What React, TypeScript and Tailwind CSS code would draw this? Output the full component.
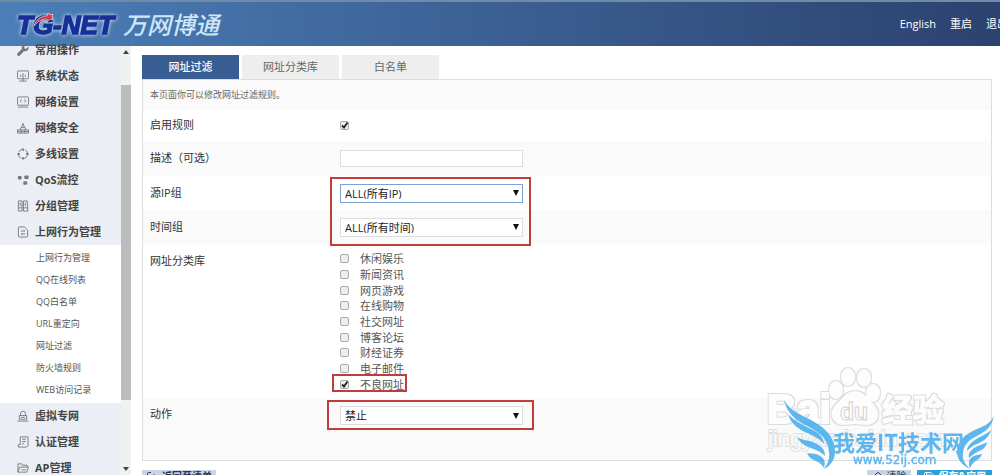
import { useState } from "react";
import type { ReactNode } from "react";
import { Eraser, LogOut, Save } from "lucide-react";

interface MenuItem {
  label: string;
  icon: ReactNode;
  children?: string[];
}

const icons = {
  status: (
    <>
      <rect x="0.5" y="1" width="12" height="8.5" rx="1" />
      <path d="M4 7.500V5M6.500 9.500v-6M9 7.500V5M6.500 9.500V12M2.500 12h8" />
    </>
  ),
  network: (
    <>
      <rect x="0.5" y="1" width="12" height="9" rx="1" />
      <path d="M5 3.5 3.5 5.2 5 7M8 3.5l1.5 1.7L8 7M1 12h11" />
    </>
  ),
  security: (
    <>
      <path d="M6.5 1v2.500M3.5 8l3-5.500L9.500 8M4.500 6h4" />
      <path d="M.5 8.500h12v3.500H.5zM4.500 8.500V12M8.500 8.500V12M.5 10.200h12" />
    </>
  ),
  lines: (
    <>
      <circle cx="6.500" cy="6.500" r="5" strokeDasharray="4.850 3" strokeDashoffset="-1.500" />
      <path d="M6.500 .5v2.500M6.500 10v2.500M.5 6.500H3M10 6.500h2.500" strokeWidth="2" />
    </>
  ),
  qos: (
    <g fill="#777" stroke="none">
      <circle cx="3" cy="4" r="2.200" />
      <rect x="8" y="1.500" width="4.500" height="4" rx="1" />
      <path d="m6.500 8.500 4-1 .8 3.500-4 1z" />
    </g>
  ),
  group: (
    <>
      <path d="M1.500 1h4v11h-4zM7 1h4l.8 11H7zM1.500 8.500h4M7 8.500h4.500" />
      <path d="M3.500 3v3.500M9 3v3.500" />
    </>
  ),
  behavior: (
    <>
      <path d="M1.500 2.200Q1.500 1 2.700 1H8l3.500 3.500v6.300q0 1.200-1.200 1.200H2.700q-1.200 0-1.200-1.200z" />
      <path d="M4.200 5.500h4.300L7.200 4.200M8.800 8.500H4.500l1.300 1.300" />
    </>
  ),
  vpn: <path d="M3.800 6V4a2.700 2.700 0 0 1 5.400 0v2M2.500 6h8v4h-8zM.5 12h12M4.500 8h4" />,
  auth: <path d="M3.500 1H12v9.500L10.500 12H1.500V9.500h2zM5.500 3.500h4M5.500 6h4M5.500 8.500h2" />,
  ap: <path d="M1 11V2h4l1 1.500h5v2M1 11l2-5.500h9.500L10.500 11zM5 8.500h4.500" />,
};

function Glyph({ children }: { children: ReactNode }) {
  return (
    <svg viewBox="0 0 13 13" className="h-3 w-3 shrink-0" fill="none" stroke="#777" strokeWidth="1">
      {children}
    </svg>
  );
}

const wrench = (
  <svg viewBox="0 0 24 24" className="h-3 w-3 shrink-0" fill="#777">
    <path d="M22.700 5.200 18.500 9.400 15 8.800 14.500 5.500 18.600 1.300A7 7 0 0 0 9.600 10L1.200 18.500a3 3 0 0 0 4.300 4.300L14 14.300a7 7 0 0 0 8.700-9.100z" />
  </svg>
);

const menu: MenuItem[] = [
  { label: "常用操作", icon: wrench },
  { label: "系统状态", icon: <Glyph>{icons.status}</Glyph> },
  { label: "网络设置", icon: <Glyph>{icons.network}</Glyph> },
  { label: "网络安全", icon: <Glyph>{icons.security}</Glyph> },
  { label: "多线设置", icon: <Glyph>{icons.lines}</Glyph> },
  { label: "QoS流控", icon: <Glyph>{icons.qos}</Glyph> },
  { label: "分组管理", icon: <Glyph>{icons.group}</Glyph> },
  {
    label: "上网行为管理",
    icon: <Glyph>{icons.behavior}</Glyph>,
    children: ["上网行为管理", "QQ在线列表", "QQ白名单", "URL重定向", "网址过滤", "防火墙规则", "WEB访问记录"],
  },
  { label: "虚拟专网", icon: <Glyph>{icons.vpn}</Glyph> },
  { label: "认证管理", icon: <Glyph>{icons.auth}</Glyph> },
  { label: "AP管理", icon: <Glyph>{icons.ap}</Glyph> },
];

const tabs = ["网址过滤", "网址分类库", "白名单"];

const categories = [
  "休闲娱乐",
  "新闻资讯",
  "网页游戏",
  "在线购物",
  "社交网址",
  "博客论坛",
  "财经证券",
  "电子邮件",
  "不良网址",
];

function Logo() {
  return (
    <svg viewBox="0 0 210 32" className="h-8 w-[210px]" role="img" aria-label="TG-NET 万网博通">
      <text
        x="3"
        y="26"
        fontFamily="Liberation Sans, sans-serif"
        fontWeight="700"
        fontStyle="italic"
        fontSize="26"
        fill="#172f96"
        stroke="#172f96"
        strokeWidth="1.5"
        className="drop-shadow-[0_0_2px_#e3eefa]"
      >
        TG-NET
      </text>
      <path d="M20 18c2-7 7-10 13-10l1-3 2 2 3-1-1 3 1 3-3-1-2 2-1-2c-5 0-9 2-13 7z" fill="#e0333c" stroke="#e9eef8" strokeWidth="0.6" />
      <text
        x="109"
        y="26"
        fontFamily="Noto Sans CJK SC, sans-serif"
        fontWeight="500"
        fontStyle="italic"
        fontSize="24"
        fill="#cfe6fa"
      >
        万网博通
      </text>
    </svg>
  );
}

function Header() {
  return (
    <header className="flex h-[46px] shrink-0 items-center justify-between overflow-hidden border-t-2 border-[#6f8ba5] bg-linear-to-r from-[#4b7fb8] to-[#2c426f] pl-3.5">
      <Logo />
      <nav className="-mr-2 flex shrink-0 gap-3.5 whitespace-nowrap text-[11px] text-white">
        <a href="#english">English</a>
        <a href="#reboot">重启</a>
        <a href="#logout">退出</a>
      </nav>
    </header>
  );
}

function Sidebar() {
  return (
    <aside className="flex w-[131px] shrink-0 bg-[#ebeff5]">
      <ul className="-mt-[9px] min-w-0 flex-1">
        {menu.map((item) => (
          <li key={item.label}>
            <a href="#menu" className="flex h-[26px] items-center gap-1.5 pl-[17px] text-[11px] font-bold text-[#444]">
              {item.icon}
              {item.label}
            </a>
            {item.children && (
              <ul className="bg-white py-0.5">
                {item.children.map((child) => (
                  <li key={child}>
                    <a href="#sub" className="flex h-[22px] items-center pl-9 text-[9px] text-[#555]">
                      {child}
                    </a>
                  </li>
                ))}
              </ul>
            )}
          </li>
        ))}
      </ul>
      <div className="flex w-2.5 flex-col items-center bg-[#f1f1f1] py-1">
        <svg viewBox="0 0 6 4" className="h-1 w-1.5">
          <path d="M0 4 3 0l3 4z" fill="#444" />
        </svg>
        <div className="mt-[31px] h-[315px] w-full bg-[#bcbcbc]" />
        <svg viewBox="0 0 6 4" className="mt-auto h-1 w-1.5">
          <path d="M0 0h6L3 4z" fill="#444" />
        </svg>
      </div>
    </aside>
  );
}

interface CheckProps {
  id: string;
  checked: boolean;
  onChange: () => void;
}

function Check({ id, checked, onChange }: CheckProps) {
  return (
    <span className="grid h-[9px] w-[9px] shrink-0">
      <input
        id={id}
        type="checkbox"
        checked={checked}
        onChange={onChange}
        className="col-start-1 row-start-1 h-[9px] w-[9px] appearance-none rounded-xs border border-[#aaa] bg-[#eee]"
      />
      {checked && (
        <svg viewBox="0 0 9 9" className="pointer-events-none col-start-1 row-start-1 h-[9px] w-[9px]">
          <path d="m2 4.500 2 2 3.500-5" fill="none" stroke="#222" strokeWidth="1.800" />
        </svg>
      )}
    </span>
  );
}

interface SelectProps {
  id: string;
  options: string[];
  focused?: boolean;
}

function Select({ id, options, focused }: SelectProps) {
  return (
    <span className="grid w-[183px] items-center">
      <select
        id={id}
        className={
          "col-start-1 row-start-1 h-[19px] w-full appearance-none border bg-white pl-1 text-[11px] leading-none text-[#222] " +
          (focused ? "border-[#7da2ce]" : "border-[#ddd]")
        }
      >
        {options.map((o) => (
          <option key={o}>{o}</option>
        ))}
      </select>
      <svg viewBox="0 0 6 6" className="pointer-events-none col-start-1 row-start-1 mr-1 h-1.5 w-1.5 justify-self-end">
        <path d="M0 0h6L3 6z" fill="#111" />
      </svg>
    </span>
  );
}

const labelStyle = "w-[190px] shrink-0 text-[11px] text-[#333]";

function FilterForm() {
  const [enabled, setEnabled] = useState(true);
  const [picked, setPicked] = useState<string[]>(["不良网址"]);

  const toggle = (name: string) => {
    setPicked((prev) => (prev.includes(name) ? prev.filter((n) => n !== name) : [...prev, name]));
  };

  return (
    <form className="relative border border-[#ddd] bg-white">
      <p className="flex h-[30px] items-center bg-[#fafafa] pl-[7px] text-[9px] text-[#666]">
        本页面你可以修改网址过滤规则。
      </p>
      <div className="flex h-[31px] items-center pl-[7px]">
        <label htmlFor="enabled" className={labelStyle}>启用规则</label>
        <Check id="enabled" checked={enabled} onChange={() => setEnabled(!enabled)} />
      </div>
      <div className="flex h-[35px] items-center bg-[#fafafa] pl-[7px]">
        <label htmlFor="desc" className={labelStyle}>描述（可选）</label>
        <input id="desc" type="text" className="h-[17px] w-[183px] border border-[#ddd] bg-white px-1 text-[11px]" />
      </div>
      <div className="flex h-[34px] items-center pl-[7px]">
        <label htmlFor="source" className={labelStyle}>源IP组</label>
        <Select id="source" options={["ALL(所有IP)"]} focused />
      </div>
      <div className="flex h-[34px] items-center bg-[#fafafa] pl-[7px]">
        <label htmlFor="time" className={labelStyle}>时间组</label>
        <Select id="time" options={["ALL(所有时间)"]} />
      </div>
      <fieldset className="flex h-[154px] items-start pt-[7px] pl-[7px]">
        <span className={labelStyle + " pt-0.5"}>网址分类库</span>
        <div className="grid h-[141px] auto-rows-fr">
          {categories.map((name, i) => (
            <div key={name} className="flex min-h-0 items-center gap-[11px]">
              <Check id={"cat" + i} checked={picked.includes(name)} onChange={() => toggle(name)} />
              <label htmlFor={"cat" + i} className="text-[11px] leading-none text-[#555]">{name}</label>
            </div>
          ))}
        </div>
      </fieldset>
      <div className="flex h-[62px] items-start bg-[#fafafa] pt-2 pl-[7px]">
        <label htmlFor="action" className={labelStyle}>动作</label>
        <Select id="action" options={["禁止", "允许"]} />
      </div>

      {/* highlight frames */}
      <div className="pointer-events-none absolute top-[97px] left-[187px] h-[69px] w-[201px] border-2 border-[#c23c3c]" />
      <div className="pointer-events-none absolute top-[294px] left-[189px] h-[18px] w-[75px] border-2 border-[#c23c3c]" />
      <div className="pointer-events-none absolute top-[320px] left-[184px] h-[30px] w-[207px] border-2 border-[#c23c3c]" />
    </form>
  );
}

function Watermark() {
  return (
    <svg viewBox="0 0 250 125" className="pointer-events-none absolute right-0 bottom-0 h-[125px] w-[250px]" aria-hidden="true">
      <defs>
        {/* thin grey contour with a white body */}
        <filter id="contour" x="-5%" y="-10%" width="110%" height="120%">
          <feMorphology in="SourceAlpha" operator="dilate" radius="1" result="fat" />
          <feFlood floodColor="#dcdcdc" />
          <feComposite in2="fat" operator="in" result="edge" />
          <feMerge>
            <feMergeNode in="edge" />
            <feMergeNode in="SourceGraphic" />
          </feMerge>
        </filter>
      </defs>
      <g fill="#fdfdfd" fontFamily="Liberation Sans, sans-serif">
        <g filter="url(#contour)" fontWeight="700" stroke="#fdfdfd" strokeWidth="2">
          <text x="17" y="73" fontSize="41">Bai</text>
          <ellipse cx="98" cy="27" rx="6" ry="8" />
          <ellipse cx="114" cy="28" rx="6" ry="8" />
          <ellipse cx="86" cy="40" rx="6" ry="8" />
          <ellipse cx="123" cy="43" rx="6" ry="8" />
          <path d="M105 42c8 0 11 6 16 11 6 6 8 11 5 16-5 8-14 4-21 4s-16 4-21-4c-3-5-1-11 5-16 5-5 8-11 16-11z" />
          <text x="132" y="71" fontFamily="Noto Sans CJK SC, sans-serif" fontSize="31" strokeWidth="1">经验</text>
        </g>
        <text x="90" y="70" fontSize="23" fontWeight="700" stroke="#d2d2d2">du</text>
        <text x="18" y="96" fontSize="22" stroke="#dedede" strokeWidth="2" paintOrder="stroke">jingyan.baidu.com</text>
      </g>
      <g fill="#48aeee" opacity="0.88">
        <path d="M34 50c5 9 13 13 23 18 16 8 28 17 28 34 0 8-5 14-11 17 4-6 6-11 5-17-1-14-10-20-22-26-12-6-20-13-23-26z" />
        <path d="M38 64c8 9 18 12 27 17 6 4 9 8 9 13-5-6-10-8-17-11-9-4-16-9-19-19z" />
        <path d="M47 87c6 4 14 3 20 7 6 3 8 7 8 12-5-5-9-6-14-8-6-2-11-5-14-11z" />
        <path d="M57 103c5 1 9 0 13 3 4 2 6 6 4 12-3-5-6-6-10-8-3-1-5-3-7-7z" />
        <path d="M244 66c-4 8-10 10-17 13-12 5-20 12-20 23 0 7 5 13 13 17-6-6-8-11-7-16 1-9 6-13 14-17 9-5 15-9 17-20z" />
        <path d="M241 80c-5 5-11 6-16 10-5 3-8 7-8 11 4-4 7-6 12-8 6-3 10-6 12-13z" />
        <path d="M237 92c-4 3-9 3-13 6s-6 6-5 10c3-3 6-5 10-7 4-1 7-4 8-9z" />
        <path d="M232 104c-4 1-8 1-11 4-2 2-3 5-1 10 2-4 4-6 7-8 2-1 4-3 5-6z" />
        <text x="83" y="101" fontFamily="Noto Sans CJK SC, sans-serif" fontSize="22" fontWeight="700">我爱IT技术网</text>
        <text x="103" y="114" fontFamily="DejaVu Sans, sans-serif" fontSize="12" stroke="#48aeee" strokeWidth="0.4">www.52ij.com</text>
      </g>
    </svg>
  );
}

export default function App() {
  const [active, setActive] = useState(0);

  return (
    <div className="relative flex h-screen flex-col overflow-hidden bg-white font-['Open_Sans','Noto_Sans_CJK_SC',sans-serif]">
      <Header />
      <div className="flex min-h-0 flex-1">
        <Sidebar />
        <main className="min-w-0 flex-1 pt-[9px] pr-2 pl-[11px]">
          <div className="flex gap-[3px]">
            {tabs.map((tab, i) => (
              <button
                key={tab}
                type="button"
                onClick={() => setActive(i)}
                className={
                  "h-6 w-[97px] text-[11px] " + (i === active ? "bg-[#385d92] font-medium text-white" : "bg-[#eee] text-[#666]")
                }
              >
                {tab}
              </button>
            ))}
          </div>
          <FilterForm />
          <div className="mt-[9px] flex gap-1.5 text-[10px] leading-none">
            <button type="button" className="mr-auto flex h-4 items-start gap-1 bg-[#c9d5e6] px-1 pt-px font-bold text-[#26374f]">
              <LogOut className="h-3 w-3" />
              返回至清单
            </button>
            <button type="button" className="flex h-4 items-start gap-1 bg-[#c9d5e6] px-1 pt-px text-[#26374f]">
              <Eraser className="h-3 w-3" />
              清除
            </button>
            <button type="button" className="flex h-4 items-start gap-1 bg-[#2f9fd8] px-1.5 pt-px font-bold text-white">
              <Save className="h-3 w-3" />
              保存&应用
            </button>
          </div>
        </main>
      </div>
      <Watermark />
    </div>
  );
}
